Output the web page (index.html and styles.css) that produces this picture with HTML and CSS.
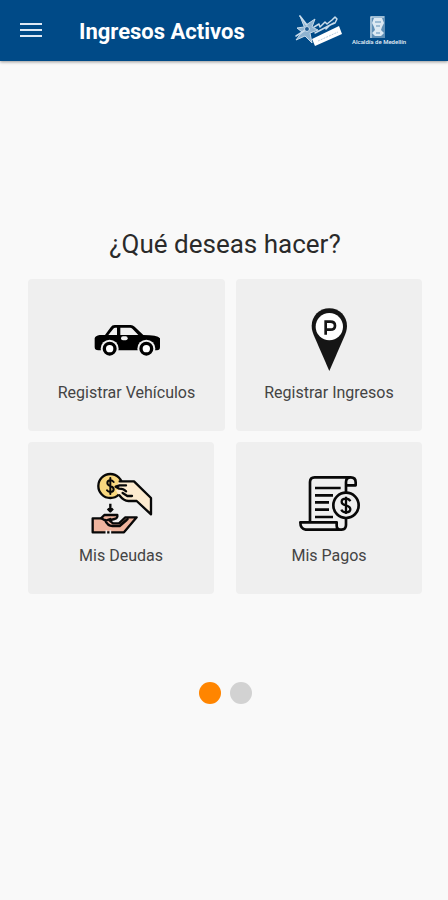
FILE: index.html
```html
<!DOCTYPE html>
<html lang="es">
<head>
<meta charset="utf-8">
<meta name="viewport" content="width=device-width, initial-scale=1">
<title>Ingresos Activos</title>
<link rel="stylesheet" href="styles.css">
</head>
<body>
<header class="bar">
  <button class="menu" type="button" aria-label="Menú">
    <svg width="22" height="18" viewBox="0 0 22 18"><path d="M0 2h22M0 8h22M0 14h22" stroke="#dfe9f5" stroke-width="2"/></svg>
  </button>
  <h1 class="title">Ingresos Activos</h1>
  <svg class="logos" viewBox="0 0 112 36" role="img" aria-label="Alcaldía de Medellín">
    <g fill="none" stroke="#c9dceb" stroke-linecap="round" stroke-linejoin="round">
      <path d="M6 3l6 9 9-6-3 8 6 3-8 3 2 10-7-7-9 4 6-8-5-4 7-1z" fill="#8fb3d0" stroke-width="1"/>
      <path d="M2 23l11-7M6 3l7 9" stroke-width="1.500"/>
      <circle cx="13" cy="16" r="2.500" fill="#1d5a92"/>
      <path d="M20 14l5-3 1 3 5-5 2 2 5-4 3-3 2 2-2 4-5 2-4 4M21 20l19-10" stroke-width="1.500"/>
    </g>
    <path d="M18 26l27-13 3 8-27 12z" fill="#fff"/>
    <path d="M24 28l20-9" stroke="#b7cde0" stroke-width="1" stroke-dasharray="2 1"/>
    <path d="M76 3h15v22H76z" fill="#5f8fb6"/>
    <path d="M77 25V4h13" fill="none" stroke="#dce9f3"/>
    <path d="M80 5h8l2 5-2 4-1 3 3 3-3 3h-6l-3-3 3-3-1-3-2-4z" fill="#dce9f3"/>
    <path d="M81 9h6M82 13h4M82 20h4" stroke="#5f8fb6"/>
    <text class="logo-text" x="58" y="31">Alcaldía de Medellín</text>
  </svg>
</header>
<main class="content">
  <h2 class="question">¿Qué deseas hacer?</h2>
  <div class="cards">
    <button class="card" type="button">
      <svg class="icon" viewBox="38 3 204 204">
        <path d="M43 100q2-8 15-10h16l17-23q4-7 12-7h48q7 0 12 5l26 25q42 0 50 10v26q0 10-9 10H54q-11 0-11-10z"/>
        <path d="M84 90l15-19q2-3 6-3h5v22zM120 68h29q4 0 7 3l18 19h-54z" fill="#efefef"/>
        <rect x="122" y="94" width="20" height="12" rx="6" fill="#efefef"/>
        <circle cx="88" cy="131" r="27" fill="#efefef"/>
        <circle cx="198" cy="131" r="27" fill="#efefef"/>
        <circle cx="88" cy="131" r="16" fill="#fff" stroke="#000" stroke-width="10"/>
        <circle cx="198" cy="131" r="16" fill="#fff" stroke="#000" stroke-width="10"/>
      </svg>
      <span class="label">Registrar Vehículos</span>
    </button>
    <button class="card" type="button">
      <svg class="icon" viewBox="0 18 204 204">
        <path d="M103 25c30 0 53 23 53 53 0 12-4 22-9 34l-44 101-44-101c-5-12-9-22-9-34 0-30 23-53 53-53z" fill="#151515"/>
        <circle cx="103" cy="80" r="41" fill="#fff"/>
        <path d="M92 104V65h14q14 0 14 12t-14 12H92" fill="none" stroke="#151515" stroke-width="8"/>
      </svg>
      <span class="label">Registrar Ingresos</span>
    </button>
    <button class="card card-short" type="button">
      <svg class="icon" viewBox="21 12 204 204">
        <g stroke="#080808" stroke-width="7" stroke-linejoin="round" stroke-linecap="round">
          <circle cx="91" cy="63" r="36" fill="#f8d77e"/>
          <path d="M119 49h43l51 50v49l-43-40h-25q-14 0-27-17-7-6-10-15l13-4-13-7z" fill="#fdebcf" stroke="none"/>
          <path d="M119 49h43l51 50v49l-43-40h-25q-14 0-27-17M138 61h-19l-12 4 11 6q13 0 20 8M128 84l14 9h14" fill="none"/>
          <path d="M101 51q-4-5-10-5-9 0-9 8 0 6 9 9 10 3 10 10 0 8-10 8-7 0-10-5M91 39v48" fill="none" stroke-width="6"/>
          <path d="M91 116v22M83 131l8 8 8-8" fill="none" stroke-linecap="butt"/>
          <path d="M38 160h25l10-10h39q2 10-9 12l-15 4 11 9h18l19-18h34l-38 45H38z" fill="#efb49e"/>
          <path d="M64 160l13 7 14-5M75 165q8 19 24 18h20l21-18M123 178l20-16" fill="none"/>
        </g>
        <path d="M79 196v11M91 196v11" stroke="#efefef" stroke-width="5"/>
      </svg>
      <span class="label">Mis Deudas</span>
    </button>
    <button class="card" type="button">
      <svg class="icon" viewBox="15 12 204 204">
        <g fill="none" stroke="#080808" stroke-width="8" stroke-linejoin="round">
          <path d="M60 169V51q0-14 14-14h108q15 0 15 15v9h-29v24M168 61V51q0-14 14-14M168 160v20q0 13-13 14H47q-16-2-16-22h109v10q0 12 14 12"/>
          <circle cx="168" cy="121" r="38"/>
          <path d="M181 109q-4-8-13-8-13 0-13 9 0 8 13 11 13 4 13 12 0 9-13 9-11 0-14-8M168 95v52" stroke-width="7"/>
          <path d="M75 69h77M75 91h54M75 112h42M75 134h42M75 156h54" stroke-width="8"/>
        </g>
      </svg>
      <span class="label">Mis Pagos</span>
    </button>
  </div>
  <nav class="dots" aria-label="Páginas">
    <button class="dot dot-active" type="button" aria-label="Página 1"></button>
    <button class="dot" type="button" aria-label="Página 2"></button>
  </nav>
</main>
</body>
</html>
```
FILE: styles.css
```css
* {
  box-sizing: border-box;
}

body {
  margin: 0;
  min-height: 100vh;
  background: #f9f9f9;
  color: #2a2a2a;
  font-family: Roboto, "Liberation Sans", sans-serif;
}

button {
  margin: 0;
  padding: 0;
  border: 0;
  background: none;
  color: inherit;
  font: inherit;
}

svg {
  display: block;
}

.bar {
  display: flex;
  align-items: center;
  height: 61px;
  padding: 0 42px 0 20px;
  background: #004a87;
  box-shadow: 0 1px 3px #00000066;
}

.menu {
  margin-right: 37px;
}

.title {
  margin: 2px auto 0 0;
  color: #fff;
  font-size: 22px;
  font-weight: 700;
  line-height: 28px;
}

.logos {
  width: 112px;
  height: 36px;
  overflow: visible;
}

.logo-text {
  fill: #e4eff8;
  font-size: 6px;
  font-weight: 500;
}

.content {
  padding: 167px 26px 0 28px;
}

.question {
  margin: 0 0 19px;
  font-size: 26px;
  font-weight: 400;
  line-height: 32px;
  text-align: center;
}

.cards {
  display: grid;
  grid-template-columns: 197fr 186fr;
  gap: 11px;
}

.card {
  display: flex;
  flex-direction: column;
  align-items: center;
  gap: 9px;
  height: 152px;
  padding-top: 27px;
  border-radius: 4px;
  background: #efefef;
}

.card-short {
  margin-right: 11px;
}

.icon {
  width: 68px;
  height: 68px;
}

.label {
  color: #444;
  font-size: 16px;
  line-height: 20px;
}

.dots {
  display: flex;
  justify-content: center;
  gap: 9px;
  margin-top: 88px;
}

.dot {
  width: 22px;
  height: 22px;
  border-radius: 50%;
  background: #d2d2d2;
}

.dot-active {
  background: #ff8500;
}
```
